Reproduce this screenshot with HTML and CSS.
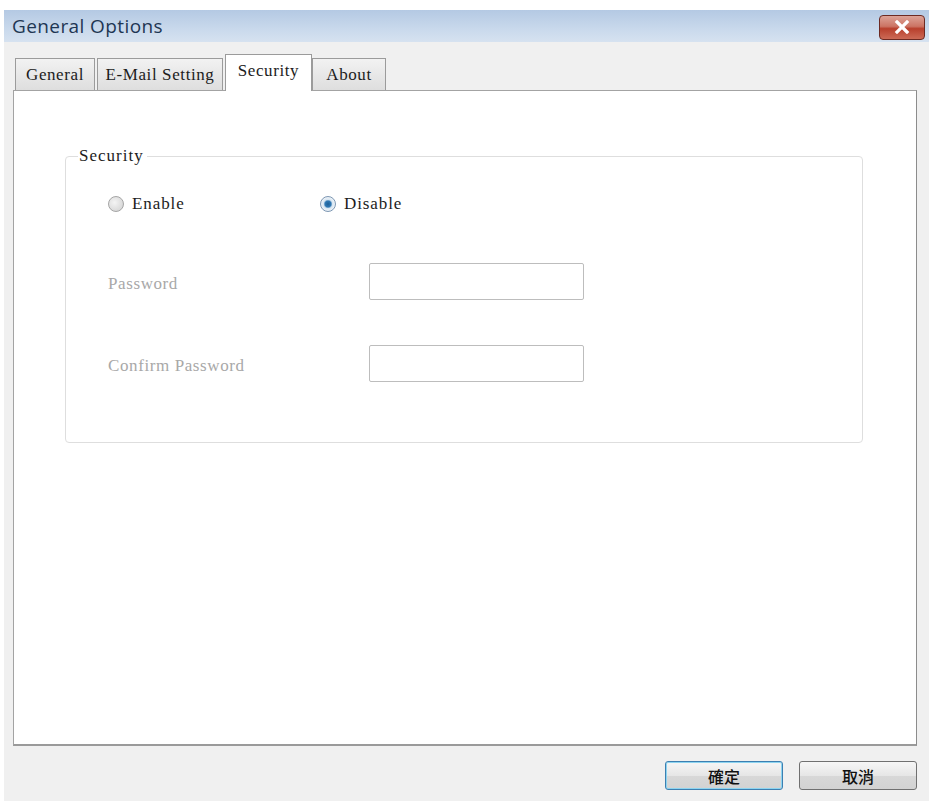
FILE: index.html
```html
<!DOCTYPE html>
<html lang="en">
<head>
  <meta charset="UTF-8">
  <title>General Options</title>
  <link rel="stylesheet" href="styles.css">
</head>
<body>

  <div class="window">
    <div class="titlebar">
      <span class="title">General Options</span>
      <button class="close-btn">
        <svg width="18" height="14" viewBox="0 0 18 14">
          <path d="M4 2 L14 12 M14 2 L4 12" stroke="#fff" stroke-width="3.2" stroke-linecap="square"/>
        </svg>
      </button>
    </div>

    <div class="dialog">
      <div class="tabs">
        <div class="tab tab-general">General</div>
        <div class="tab tab-mail">E-Mail Setting</div>
        <div class="tab tab-security active">Security</div>
        <div class="tab tab-about">About</div>
      </div>

      <div class="panel">
        <fieldset class="group">
          <legend>Security</legend>

          <div class="radio-row">
            <label class="radio"><span class="dot"></span>Enable</label>
            <label class="radio"><span class="dot checked"></span>Disable</label>
          </div>

          <div class="field">
            <span class="field-label">Password</span>
            <input type="password" class="text-box" disabled>
          </div>
          <div class="field">
            <span class="field-label">Confirm Password</span>
            <input type="password" class="text-box" disabled>
          </div>
        </fieldset>
      </div>

      <div class="buttons">
        <button class="btn default">確定</button>
        <button class="btn">取消</button>
      </div>
    </div>
  </div>

</body>
</html>
```

FILE: styles.css
```css
body {
  margin: 0;
  background: #ffffff;
  font-family: "Liberation Serif", "Noto Sans CJK TC", serif;
  color: #222;
}

.window {
  margin: 10px 2px 0 4px;
  height: 791px;
  display: flex;
  flex-direction: column;
  background: #f0f0f0;
}

.titlebar {
  height: 32px;
  display: flex;
  align-items: center;
  justify-content: space-between;
  padding: 0 4px 0 8px;
  background: linear-gradient(to bottom, #b4c9e3, #c9d9ec 60%, #d6e2f0);
}

.title {
  font-family: "Open Sans", "Noto Sans", sans-serif;
  font-size: 19px;
  color: #1e3653;
  letter-spacing: 0.4px;
}

.close-btn {
  width: 46px;
  height: 25px;
  margin-top: 2px;
  border: 1px solid #6d2a22;
  border-radius: 4px;
  background: linear-gradient(to bottom, #dca397, #cc7464 45%, #b8402d 55%, #cc6a56);
  display: flex;
  align-items: center;
  justify-content: center;
  padding: 0;
}

.dialog {
  flex: 1;
  display: flex;
  flex-direction: column;
  padding: 11px 12px 0 9px;
}

.tabs {
  display: flex;
  align-items: flex-end;
  padding-left: 2px;
  height: 37px;
  position: relative;
  z-index: 1;
}

.tab {
  height: 32px;
  margin-right: 2px;
  border: 1px solid #9b9b9b;
  border-bottom: none;
  background: linear-gradient(to bottom, #f2f2f2, #dedede);
  font-size: 17px;
  letter-spacing: 0.6px;
  line-height: 32px;
  text-align: center;
  color: #1c1c1c;
  box-sizing: border-box;
}

.tab-general { width: 80px; }
.tab-mail { width: 126px; }
.tab-security { width: 87px; }
.tab-about { width: 74px; }

.tab.active {
  height: 37px;
  background: #ffffff;
  margin-bottom: -1px;
  margin-right: 0;
  line-height: 32px;
}

.panel {
  height: 656px;
  border: 1px solid #a3a3a3;
  border-right-color: #8c8c8c;
  border-bottom: 2px solid #9a9a9a;
  background: #ffffff;
  padding: 55px 0 0 51px;
  box-sizing: border-box;
}

.group {
  width: 798px;
  height: 297px;
  margin: 0;
  padding: 0 0 0 42px;
  border: 1px solid #dedede;
  border-radius: 4px;
  box-sizing: border-box;
}

.group legend {
  font-size: 17px;
  letter-spacing: 1px;
  padding: 0 3px 0 1px;
  margin-left: -30px;
  color: #1c1c1c;
}

.radio-row {
  display: flex;
  margin-top: 28px;
  margin-bottom: 49px;
}

.radio {
  display: flex;
  align-items: center;
  width: 212px;
  font-size: 17px;
  letter-spacing: 0.9px;
  color: #1c1c1c;
}

.dot {
  width: 14px;
  height: 14px;
  border-radius: 50%;
  border: 1px solid #a5a5a5;
  background: radial-gradient(circle at 40% 40%, #f4f4f4, #cfcfcf);
  margin-right: 8px;
}

.dot.checked {
  border-color: #7d97b3;
  background: radial-gradient(circle, #1e5f96 0, #2f78b4 3px, #d8e6f2 4.5px, #eef3f8 7px);
}

.field {
  display: flex;
  align-items: center;
  height: 37px;
  margin-bottom: 45px;
}

.field-label {
  width: 261px;
  padding-top: 4px;
  font-size: 17px;
  letter-spacing: 0.6px;
  color: #a8a8a8;
}

.text-box {
  width: 215px;
  height: 37px;
  box-sizing: border-box;
  border: 1px solid #bdbdbd;
  border-radius: 2px;
  background: #ffffff;
  margin: 0;
}

.buttons {
  display: flex;
  justify-content: flex-end;
  gap: 16px;
  padding: 15px 0 0;
}

.btn {
  width: 118px;
  height: 29px;
  border: 1px solid #707070;
  border-radius: 3px;
  background: linear-gradient(to bottom, #f6f6f6, #e6e6e6 50%, #d8d8d8 51%, #d2d2d2);
  font-family: "Noto Sans CJK TC", sans-serif;
  font-size: 16px;
  font-weight: 500;
  color: #111;
  padding: 0;
}

.btn.default {
  border-color: #3c7fb1;
  box-shadow: inset 0 0 0 1px #8dd4f0;
}
```
